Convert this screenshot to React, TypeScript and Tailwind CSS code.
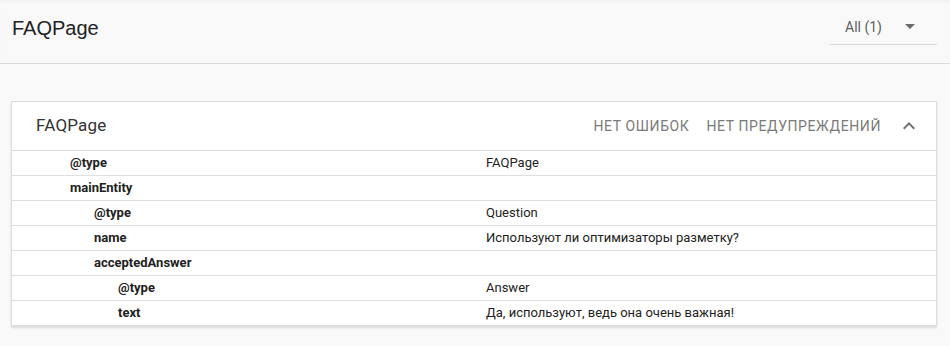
import { useState } from "react";

const rows = [
  { key: "@type", value: "FAQPage", level: 0 },
  { key: "mainEntity", value: "", level: 0 },
  { key: "@type", value: "Question", level: 1 },
  { key: "name", value: "Используют ли оптимизаторы разметку?", level: 1 },
  { key: "acceptedAnswer", value: "", level: 1 },
  { key: "@type", value: "Answer", level: 2 },
  { key: "text", value: "Да, используют, ведь она очень важная!", level: 2 },
];

const indent = ["pl-[58px]", "pl-[82px]", "pl-[106px]"];

const App = () => {
  const [open, setOpen] = useState(true);

  return (
    <div className="min-h-screen bg-[#f9f9f9] font-['Roboto',sans-serif]">
      {/* Top bar */}
      <header className="h-[64px] border-b border-[#dddddd] flex items-start justify-between pl-3 pr-[13px] shadow-[inset_0_3px_3px_-1px_rgba(0,0,0,0.035)]">
        <h1 className="mt-[16px] text-[20px] leading-[24px] text-[#222222] font-['Liberation_Sans',Arial,sans-serif]">
          FAQPage
        </h1>
        <button className="mt-[10px] w-[108px] h-[35px] border-b border-[#dcdcdc] flex items-center justify-between pl-4 pr-[22px] text-[14px] text-[#5f5f5f]">
          <span>All (1)</span>
          <svg width="10" height="5" viewBox="0 0 10 5" className="mb-[2px]">
            <path d="M0 0l5 5 5-5z" fill="#6b6b6b" />
          </svg>
        </button>
      </header>

      {/* Result card */}
      <main className="pt-[37px] pl-[11px] pr-[13px]">
        <div className="bg-white border border-[#dddddd] shadow-[0_2px_2px_rgba(0,0,0,0.12)]">
          <div className="h-[49px] border-b border-[#dddddd] flex items-center justify-between pl-6 pr-[15px]">
            <span className="text-[17px] tracking-[0.2px] text-[#333333]">FAQPage</span>
            <div className="flex items-center text-[14px] tracking-[0.6px] text-[#7a7a7a]">
              <span>НЕТ ОШИБОК</span>
              <span className="ml-[17px]">НЕТ ПРЕДУПРЕЖДЕНИЙ</span>
              <button onClick={() => setOpen(!open)} className="ml-[16px] w-6 h-6 flex items-center justify-center">
                <svg width="24" height="24" viewBox="0 0 24 24" className={open ? "" : "rotate-180"}>
                  <path d="M7.41 15.41L12 10.83l4.59 4.58L18 14l-6-6-6 6z" fill="#6f6f6f" />
                </svg>
              </button>
            </div>
          </div>

          {open && (
            <div className="divide-y divide-[#e0e0e0]">
              {rows.map((row, i) => (
                <div key={i} className="grid grid-cols-[474px_1fr] text-[13px] leading-[24px] text-[#222222]">
                  <div className={`${indent[row.level]} font-bold`}>{row.key}</div>
                  <div>{row.value}</div>
                </div>
              ))}
            </div>
          )}
        </div>
      </main>
    </div>
  );
};

export default App;
